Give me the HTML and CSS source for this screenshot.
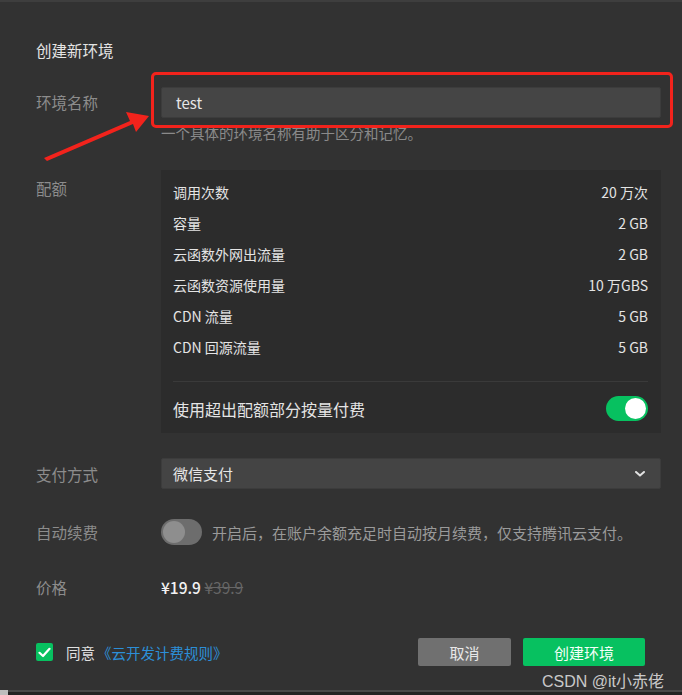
FILE: index.html
```html
<!DOCTYPE html>
<html lang="zh-CN">
<head>
<meta charset="utf-8">
<title>创建新环境</title>
<link rel="stylesheet" href="styles.css">
</head>
<body>
<div class="dialog">
  <div class="title">创建新环境</div>

  <div class="row row-name">
    <div class="label">环境名称</div>
    <div class="field">
      <div class="input">test</div>
      <div class="help">一个具体的环境名称有助于区分和记忆。</div>
    </div>
  </div>

  <div class="row row-quota">
    <div class="label label-top">配额</div>
    <div class="quota">
      <div class="qrow"><span>调用次数</span><span>20 万次</span></div>
      <div class="qrow"><span>容量</span><span>2 GB</span></div>
      <div class="qrow"><span>云函数外网出流量</span><span>2 GB</span></div>
      <div class="qrow"><span>云函数资源使用量</span><span>10 万GBS</span></div>
      <div class="qrow"><span>CDN 流量</span><span>5 GB</span></div>
      <div class="qrow"><span>CDN 回源流量</span><span>5 GB</span></div>
      <div class="divider"></div>
      <div class="qswitch"><span>使用超出配额部分按量付费</span><span class="toggle on"><span class="knob"></span></span></div>
    </div>
  </div>

  <div class="row row-pay">
    <div class="label">支付方式</div>
    <div class="select">
      <span>微信支付</span>
      <svg class="chev" width="10" height="6" viewBox="0 0 10 6"><path d="M1 1 L5 4.6 L9 1" fill="none" stroke="#e2e2e2" stroke-width="2" stroke-linecap="round" stroke-linejoin="round"/></svg>
    </div>
  </div>

  <div class="row row-renew">
    <div class="label">自动续费</div>
    <div class="renew">
      <span class="toggle off"><span class="knob"></span></span>
      <span class="renew-text">开启后，在账户余额充足时自动按月续费，仅支持腾讯云支付。</span>
    </div>
  </div>

  <div class="row row-price">
    <div class="label">价格</div>
    <div class="price"><span class="now">¥19.9</span> <span class="old">¥39.9</span></div>
  </div>

  <div class="footer">
    <div class="agree">
      <span class="check"><svg width="13" height="11" viewBox="0 0 13 11"><path d="M1.5 5.8 L5 9 L11.5 1.8" fill="none" stroke="#fff" stroke-width="2.2" stroke-linecap="round" stroke-linejoin="round"/></svg></span>
      <span class="agree-text">同意</span><a class="link">《云开发计费规则》</a>
    </div>
    <div class="buttons">
      <button class="btn cancel">取消</button>
      <button class="btn primary">创建环境</button>
    </div>
  </div>

  <div class="highlight"></div>
  <svg class="arrow" width="160" height="170" viewBox="0 0 160 170">
    <polygon points="44,158 130,121 126,112 149,116 136,132 133,124 47,161" fill="#f2231c"/>
  </svg>
  <div class="watermark">CSDN @it小赤佬</div>
</div>
<div class="taskbar"><span class="tb-item"></span></div>
</body>
</html>
```

FILE: styles.css
```css
* { box-sizing: border-box; }
html, body { margin: 0; padding: 0; }
body {
  background: #323232;
  font-family: "Noto Sans CJK SC", "Noto Sans", sans-serif;
  color: #e2e2e2;
  width: 682px;
  height: 695px;
  overflow: hidden;
}
.dialog {
  position: relative;
  height: 690px;
  border-top: 2px solid #3e3e3e;
  padding: 0 21px 0 36px;
}
.title {
  margin-top: 38px;
  font-size: 15.5px;
  line-height: 20px;
  color: #e4e4e4;
}
.row {
  display: flex;
  align-items: center;
}
.label {
  width: 125px;
  flex: none;
  font-size: 15.5px;
  line-height: 20px;
  color: #8c8c8c;
}
.row-name { margin-top: 27px; align-items: flex-start; }
.row-name .label { padding-top: 5px; }
.field { width: 500px; }
.input {
  height: 31px;
  background: #454545;
  border: 1px solid #3c3c3c;
  border-radius: 2px;
  padding-left: 14px;
  font-size: 15px;
  line-height: 29px;
  color: #e6e6e6;
}
.help {
  margin-top: 5px;
  font-size: 14.5px;
  line-height: 20px;
  color: #8a8a8a;
}
.row-quota { margin-top: 27px; align-items: flex-start; }
.label-top { padding-top: 8px; }
.quota {
  width: 500px;
  background: #2c2c2c;
  padding: 6px 13px 12px 12px;
}
.qrow {
  display: flex;
  justify-content: space-between;
  height: 31px;
  align-items: center;
  font-size: 14px;
  color: #e4e4e4;
}
.divider {
  margin-top: 19px;
  height: 1px;
  background: #3a3a3a;
}
.qswitch {
  margin-top: 14px;
  display: flex;
  justify-content: space-between;
  align-items: center;
  height: 25px;
  font-size: 16px;
  color: #e4e4e4;
}
.toggle {
  display: inline-flex;
  align-items: center;
  flex: none;
  border-radius: 13px;
}
.toggle.on {
  width: 42px;
  height: 25px;
  background: #07c160;
  justify-content: flex-end;
  padding: 2px;
}
.toggle.on .knob {
  width: 21px;
  height: 21px;
  border-radius: 50%;
  background: #fff;
}
.toggle.off {
  width: 41px;
  height: 26px;
  background: #6d6d6d;
  padding: 2px;
}
.toggle.off .knob {
  width: 22px;
  height: 22px;
  border-radius: 50%;
  background: #8e8e8e;
}
.row-pay { margin-top: 25px; }
.select {
  width: 500px;
  height: 31px;
  background: #444444;
  border: 1px solid #3c3c3c;
  border-radius: 2px;
  display: flex;
  align-items: center;
  justify-content: space-between;
  padding: 0 15px 0 11px;
  font-size: 15px;
  color: #e6e6e6;
}
.row-renew { margin-top: 30px; }
.renew {
  display: flex;
  align-items: center;
  gap: 10px;
}
.renew-text {
  font-size: 15px;
  color: #9a9a9a;
}
.row-price { margin-top: 32px; }
.price { font-size: 15.5px; line-height: 20px; }
.now { color: #f2f2f2; font-weight: 500; }
.old { color: #666; text-decoration: line-through; }
.footer {
  margin-top: 41px;
  margin-right: 16px;
  display: flex;
  justify-content: space-between;
  align-items: center;
  height: 28px;
}
.agree { display: flex; align-items: center; font-size: 14.5px; }
.check {
  width: 17px;
  height: 18px;
  background: #07c160;
  border-radius: 2px;
  display: inline-flex;
  align-items: center;
  justify-content: center;
  margin-right: 13px;
}
.agree-text { color: #e0e0e0; }
.link { color: #2c8fd8; margin-left: 2px; }
.buttons { display: flex; gap: 12px; }
.btn {
  height: 28px;
  border: none;
  border-radius: 2px;
  font-family: inherit;
  font-size: 15px;
  padding: 0;
}
.cancel { width: 93px; background: #707070; color: #e8e8e8; }
.primary { width: 122px; background: #07c160; color: #f4fff8; }
.highlight {
  position: absolute;
  left: 151px;
  top: 70px;
  width: 522px;
  height: 56px;
  border: 3px solid #f2231c;
  border-radius: 5px;
}
.arrow {
  position: absolute;
  left: 0;
  top: -2px;
}
.watermark {
  position: absolute;
  right: 18px;
  top: 666px;
  font-family: "Liberation Sans", "Noto Sans CJK SC", sans-serif;
  font-size: 16px;
  color: rgba(230,230,230,0.85);
}
.taskbar {
  height: 5px;
  border-top: 2px solid #474747;
  background: #222;
  position: relative;
}
.tb-item {
  position: absolute;
  left: 0;
  top: -2px;
  width: 8px;
  height: 5px;
  background: #bdbdbd;
}
```
